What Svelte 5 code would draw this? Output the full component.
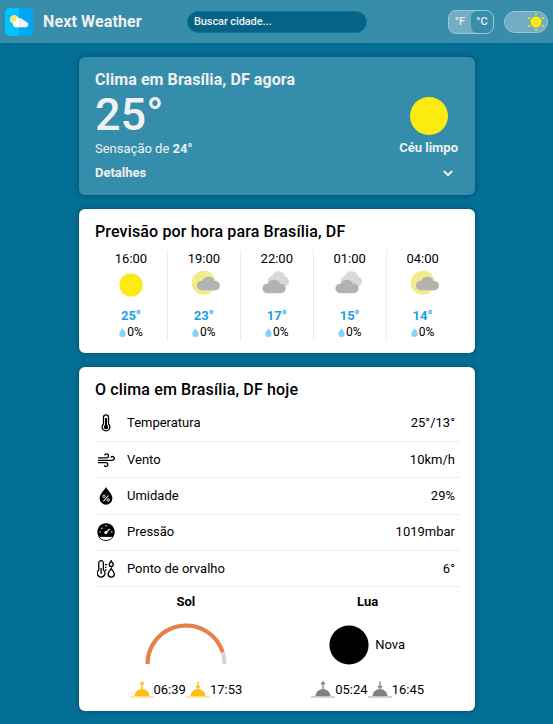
<script>
  const hours = [
    { time: '16:00', icon: 'sun', temp: '25°', rain: '0%' },
    { time: '19:00', icon: 'partly', temp: '23°', rain: '0%' },
    { time: '22:00', icon: 'clouds', temp: '17°', rain: '0%' },
    { time: '01:00', icon: 'clouds', temp: '15°', rain: '0%' },
    { time: '04:00', icon: 'partly', temp: '14°', rain: '0%' }
  ];
  const details = [
    { icon: 'temp', label: 'Temperatura', value: '25°/13°' },
    { icon: 'wind', label: 'Vento', value: '10km/h' },
    { icon: 'humidity', label: 'Umidade', value: '29%' },
    { icon: 'pressure', label: 'Pressão', value: '1019mbar' },
    { icon: 'dew', label: 'Ponto de orvalho', value: '6°' }
  ];
  const rays = [0, 60, 120, 180, 240, 300];
</script>

{#snippet horizon(color, line, down)}
  <svg class="horizon" width="24" height="18" viewBox="0 0 24 18">
    <path d="M4.5 15.5a7.5 7.5 0 0 1 15 0z" fill={color} />
    <rect y="15.2" width="24" height="1.5" fill={line} />
    {#if down}
      <path d="M12 .5v7M10 4.8l2 2.4 2-2.4" fill="none" stroke={color} stroke-width="1.3" />
    {:else}
      <path d="M12 8V1.2M10 3.4l2-2.4 2 2.4" fill="none" stroke={color} stroke-width="1.3" />
    {/if}
  </svg>
{/snippet}

<div class="page">
  <header>
    <div class="brand">
      <svg width="28" height="28" viewBox="0 0 28 28">
        <rect width="28" height="28" rx="5" fill="#00c3ff" />
        <path d="M14 0h9a5 5 0 0 1 5 5v18a5 5 0 0 1-5 5h-9z" fill="#00a8f3" />
        <circle cx="9.2" cy="11.4" r="4.4" fill="#ffe477" />
        <path d="M11 19.2a3.1 3.1 0 0 1-.7-6.1 4.6 4.6 0 0 1 8.5-.5c.5-.3 2.1.1 2.2 1.4a2.6 2.6 0 0 1-.4 5.2z" fill="#f1f1f1" />
        <path d="M8.3 16.2a3 3 0 0 1 2-3.1A4.6 4.6 0 0 1 14 9.8v9.4h-3a3 3 0 0 1-2.7-3z" fill="#fff" />
      </svg>
      <span>Next Weather</span>
    </div>
    <input type="text" placeholder="Buscar cidade..." />
    <div class="switches">
      <div class="units"><span>°F</span><span class="on">°C</span></div>
      <div class="theme">
        <svg width="18" height="18" viewBox="-9 -9 18 18" fill="#fdea10">
          <circle r="5.5" />
          {#each rays as a}
            <circle cy="-7.8" r="1.05" transform="rotate({a})" />
          {/each}
        </svg>
      </div>
    </div>
  </header>

  <main>
    <section class="now">
      <h2>Clima em Brasília, DF agora</h2>
      <div class="current">
        <div>
          <div class="big">25°</div>
          <div class="feels">Sensação de <b>24°</b></div>
        </div>
        <div class="condition">
          <svg width="38" height="38" viewBox="0 0 38 38"><circle cx="19" cy="19" r="19" fill="#fdea10" /></svg>
          <b>Céu limpo</b>
        </div>
      </div>
      <div class="more">
        <b>Detalhes</b>
        <svg width="10" height="7" viewBox="0 0 10 7"><path d="M.8 1 5 5.2 9.2 1" fill="none" stroke="#f1f1f1" stroke-width="1.8" /></svg>
      </div>
    </section>

    <section class="hourly">
      <h2>Previsão por hora para Brasília, DF</h2>
      <div class="hours">
        {#each hours as h}
          <div class="hour">
            <span class="time">{h.time}</span>
            <svg width="32" height="28" viewBox="0 0 32 28">
              {#if h.icon === 'sun'}
                <circle cx="16" cy="15.5" r="12" fill="#fdea10" />
              {:else if h.icon === 'partly'}
                <circle cx="15.7" cy="13.3" r="12.5" fill="#f2eb8c" />
                <path d="M13.5 21a4.9 4.9 0 0 1 0-9.800h.7a7 7 0 0 1 12.800.1h1.200a4.900 4.900 0 0 1 0 9.700z" fill="#b2b2b2" />
              {:else}
                <path d="M11 16.5a4.8 4.8 0 0 1-4-7.5A5 5 0 0 1 11 6a7 7 0 0 1 13.5 1A4.9 4.9 0 0 1 25 16.5z" fill="#d9d9d9" />
                <path d="M5.7 24a4.900 4.900 0 0 1 0-9.800h.7a7 7 0 0 1 12.800 0h.9a4.900 4.900 0 0 1 0 9.800z" fill="#b2b2b2" />
              {/if}
            </svg>
            <b>{h.temp}</b>
            <span class="rain">
              <svg width="7" height="9" viewBox="0 0 7 9"><path d="M3.5 0C4.5 2 6.7 4 6.7 6a3.2 3 0 0 1-6.4 0C.3 4 2.5 2 3.5 0z" fill="#81d4fa" /></svg>{h.rain}
            </span>
          </div>
        {/each}
      </div>
    </section>

    <section class="today">
      <h2>O clima em Brasília, DF hoje</h2>
      {#each details as d}
        <div class="row">
          <svg width="18" height="18" viewBox="0 0 18 18" fill="none" stroke="#000" stroke-width="1.3">
            {#if d.icon === 'temp'}
              <path d="M6.5 10V3.3a2.5 2.5 0 0 1 5 0V10a3.9 3.9 0 1 1-5 0z" />
              <circle cx="9" cy="13" r="2.2" fill="#000" stroke="none" />
              <path d="M9 4v9" stroke-width="2" />
            {:else if d.icon === 'wind'}
              <path d="M1 6.9h8.5a2 2 0 1 0-1.9-2.6M1 9.3h14.5a1.900 1.900 0 1 0-1.700-2.800M1 11.700h8a1.900 1.900 0 1 1-1.800 2.500" stroke-width="1.3" />
            {:else if d.icon === 'humidity'}
              <path d="M9 0C10.5 3 15.4 7.2 15.4 11.3a6.4 6.4 0 0 1-12.8 0C2.6 7.2 7.5 3 9 0z" fill="#000" stroke="none" />
              <path d="m6.5 14 5-5.5" stroke="#fff" stroke-width="1.1" />
              <circle cx="6.9" cy="9.3" r="1.2" stroke="#fff" stroke-width=".9" />
              <circle cx="11.2" cy="13" r="1.2" stroke="#fff" stroke-width=".9" />
            {:else if d.icon === 'pressure'}
              <path d="M1.3 13A8.7 8.7 0 1 1 16.7 13z" fill="#000" stroke="none" />
              <path d="M1.8 13.5h14.4c-1.5 2.6-3.8 4-7.200 4s-5.700-1.400-7.200-4z" fill="#fff" stroke-width=".9" />
              <path d="m9 9.500 3.800-3.700M9 2v1.500M2.500 9H4M14 9h1.500M4.300 4.800l1 1" stroke="#fff" stroke-width="1.1" />
              <circle cx="8.9" cy="9.6" r="1.5" fill="#fff" stroke="none" />
            {:else}
              <path d="M1.800 10V3a2.300 2.300 0 0 1 4.600 0v7a3.900 3.900 0 1 1-4.600 0zM4.100 8v6M8 4.600h2M8 7.300h1.500M8 10h1.500" />
              <path d="M14.200.8c.5 1.500 2 2.300 2 3.700a2 2 0 0 1-4 0c0-1.400 1.500-2.200 2-3.700zM14.200 8.500c.8 2 3.100 3.400 3.100 5.600a3.100 3.100 0 0 1-6.200 0c0-2.200 2.300-3.600 3.100-5.600z" />
            {/if}
          </svg>
          <span class="label">{d.label}</span>
          <span>{d.value}</span>
        </div>
      {/each}
      <div class="astro">
        <div class="body">
          <b>Sol</b>
          <div class="figure">
            <svg width="82" height="41" viewBox="0 0 82 41" fill="none" stroke-width="4">
              <path d="M2.5 41a38.5 38.5 0 0 1 77 0" stroke="#d3d3d3" />
              <path d="M2.5 41A38.5 38.5 0 0 1 77.6 29" stroke="#e97f45" />
            </svg>
          </div>
          <div class="times">
            {@render horizon('#ffbc11', '#ffdf8c', false)}<span>06:39</span>{@render horizon('#ffbc11', '#ffdf8c', true)}<span>17:53</span>
          </div>
        </div>
        <div class="body">
          <b>Lua</b>
          <div class="figure moon">
            <svg width="40" height="40" viewBox="0 0 40 40"><circle cx="20" cy="20" r="19.6" /></svg>
            <span>Nova</span>
          </div>
          <div class="times">
            {@render horizon('#808080', '#c4c4c4', false)}<span>05:24</span>{@render horizon('#808080', '#c4c4c4', true)}<span>16:45</span>
          </div>
        </div>
      </div>
    </section>
  </main>
</div>

<style>
  :global(body) { background: #046f96; overflow: hidden; }
  .page {
    height: 724px;
    box-sizing: border-box;
    overflow: hidden;
    font: 13px/16px Roboto, sans-serif;
    color: #000;
  }
  header {
    height: 43px;
    display: flex;
    align-items: center;
    background: #388dab;
    color: #f1f1f1;
    padding: 0 5px;
    box-sizing: border-box;
  }
  .brand { display: flex; align-items: center; gap: 10px; width: 182px; font-size: 16px; font-weight: 700; letter-spacing: .13px; }
  input {
    width: 180px;
    height: 22px;
    box-sizing: border-box;
    border: 1px solid #127396;
    border-radius: 11px;
    padding: 0 6px;
    background: #046387;
    font: 500 11px Roboto, sans-serif;
    letter-spacing: -.1px;
  }
  input::placeholder { color: #f1f1f1; opacity: 1; }
  .switches { margin-left: auto; display: flex; align-items: center; gap: 10px; }
  .units, .theme { box-sizing: border-box; border: 1px solid #9cc6d5; background: #73adc3; display: flex; }
  .units { width: 46px; height: 24px; border-radius: 8px; overflow: hidden; font-size: 11px; font-weight: 500; line-height: 22px; text-align: center; }
  .units span { flex: 1; }
  .units .on { background: #388dab; border-radius: 6px; }
  .theme { width: 44px; height: 22px; border-radius: 11px; align-items: center; justify-content: flex-end; padding-right: 2px; }
  main { width: 396px; margin: 14px auto 0; display: flex; flex-direction: column; gap: 14px; }
  section { box-sizing: border-box; border-radius: 6px; padding: 14px 16px 0 16.5px; background: #fff; box-shadow: 0 0 6px rgba(0, 0, 0, .35); }
  h2 { margin: 0; font-size: 16px; line-height: 18px; font-weight: 500; letter-spacing: .14px; }
  .now { height: 138px; background: #348eab; color: #f1f1f1; }
  .now h2 { font-weight: 700; letter-spacing: .09px; }
  .current { display: flex; justify-content: space-between; }
  .big { font-size: 45px; line-height: 52px; font-weight: 500; height: 52px; }
  .condition { display: flex; flex-direction: column; align-items: center; padding-top: 8px; gap: 5px; height: 60px; margin-right: .5px; }
  .more { display: flex; justify-content: space-between; align-items: center; margin-top: 8px; padding-right: 5.5px; }
  .hourly { height: 144px; }
  .hours { display: flex; margin-top: 9px; height: 90px; }
  .hour { flex: 1; display: flex; flex-direction: column; align-items: center; border-right: 1px solid #ececec; }
  .hour:last-child { border: 0; }
  .hour > svg { margin: 4px 0 11px; }
  .hour .time { position: relative; top: 1px; }
  .hour b { color: #1ba1ea; }
  .rain { font-size: 12px; display: flex; align-items: center; gap: 1px; }
  .today { height: 344px; }
  .row { display: flex; align-items: center; height: 36.4px; box-sizing: border-box; border-bottom: 1px solid #ececec; padding: 0 3.5px 0 2px; }
  .today h2 { margin-bottom: 6.5px; }
  .label { margin-left: 12px; flex: 1; }
  .astro { display: flex; padding-top: 6.5px; }
  .body { flex: 1; display: flex; flex-direction: column; align-items: center; }
  .figure { display: flex; align-items: center; height: 41px; margin-top: 13px; }
  .moon { gap: 6px; margin-top: 15px; height: 41px; padding-right: 1px; }
  .times { display: flex; align-items: center; margin-top: 17px; }
  .moon + .times { margin-top: 15px; }
</style>
